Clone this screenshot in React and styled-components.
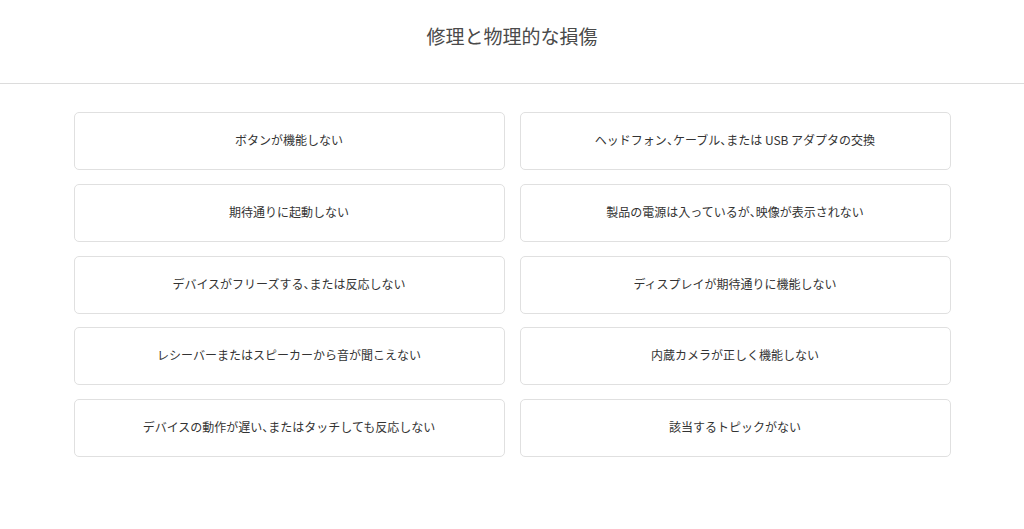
import React from 'react';
import styled, { createGlobalStyle } from 'styled-components';

const items = [
  'ボタンが機能しない',
  'ヘッドフォン、ケーブル、または USB アダプタの交換',
  '期待通りに起動しない',
  '製品の電源は入っているが、映像が表示されない',
  'デバイスがフリーズする、または反応しない',
  'ディスプレイが期待通りに機能しない',
  'レシーバーまたはスピーカーから音が聞こえない',
  '内蔵カメラが正しく機能しない',
  'デバイスの動作が遅い、またはタッチしても反応しない',
  '該当するトピックがない',
];

// half-width the japanese comma like the original font does
const renderText = (text) =>
  text.split('、').map((part, i, arr) => (
    <React.Fragment key={i}>
      {part}
      {i < arr.length - 1 && <Punct>、</Punct>}
    </React.Fragment>
  ));

const App = () => {
  return (
    <Page>
      <GlobalStyle />
      <Header>
        <Title>修理と物理的な損傷</Title>
      </Header>
      <Grid>
        {items.map((text) => (
          <Card key={text}>{renderText(text)}</Card>
        ))}
      </Grid>
    </Page>
  );
};

export default App;

const GlobalStyle = createGlobalStyle`
  body {
    margin: 0;
    background: #fff;
    font-family: "Noto Sans CJK JP", "Noto Sans", sans-serif;
    color: #333;
  }
`;

const Page = styled.div`
  width: 100%;
  min-height: 529px;
  background: #fff;
`;

const Header = styled.div`
  height: 84px;
  border-bottom: 1px solid #dcdcdc;
  display: flex;
  justify-content: center;
  align-items: flex-start;
  box-sizing: border-box;
`;

const Title = styled.h1`
  margin: 23px 0 0;
  font-size: 19px;
  line-height: 26px;
  font-weight: 400;
  color: #4a4a4a;
`;

const Grid = styled.div`
  width: 877px;
  margin: 28px auto 0;
  display: grid;
  grid-template-columns: 1fr 1fr;
  column-gap: 15px;
  row-gap: 13.75px;
`;

const Card = styled.div`
  height: 58px;
  box-sizing: border-box;
  border: 1.5px solid #e0e0e0;
  border-radius: 5px;
  padding-bottom: 3px;
  display: flex;
  align-items: center;
  justify-content: center;
  font-size: 12px;
  color: #333;
  text-align: center;
  white-space: pre;
`;

const Punct = styled.span`
  font-feature-settings: "halt";
`;
